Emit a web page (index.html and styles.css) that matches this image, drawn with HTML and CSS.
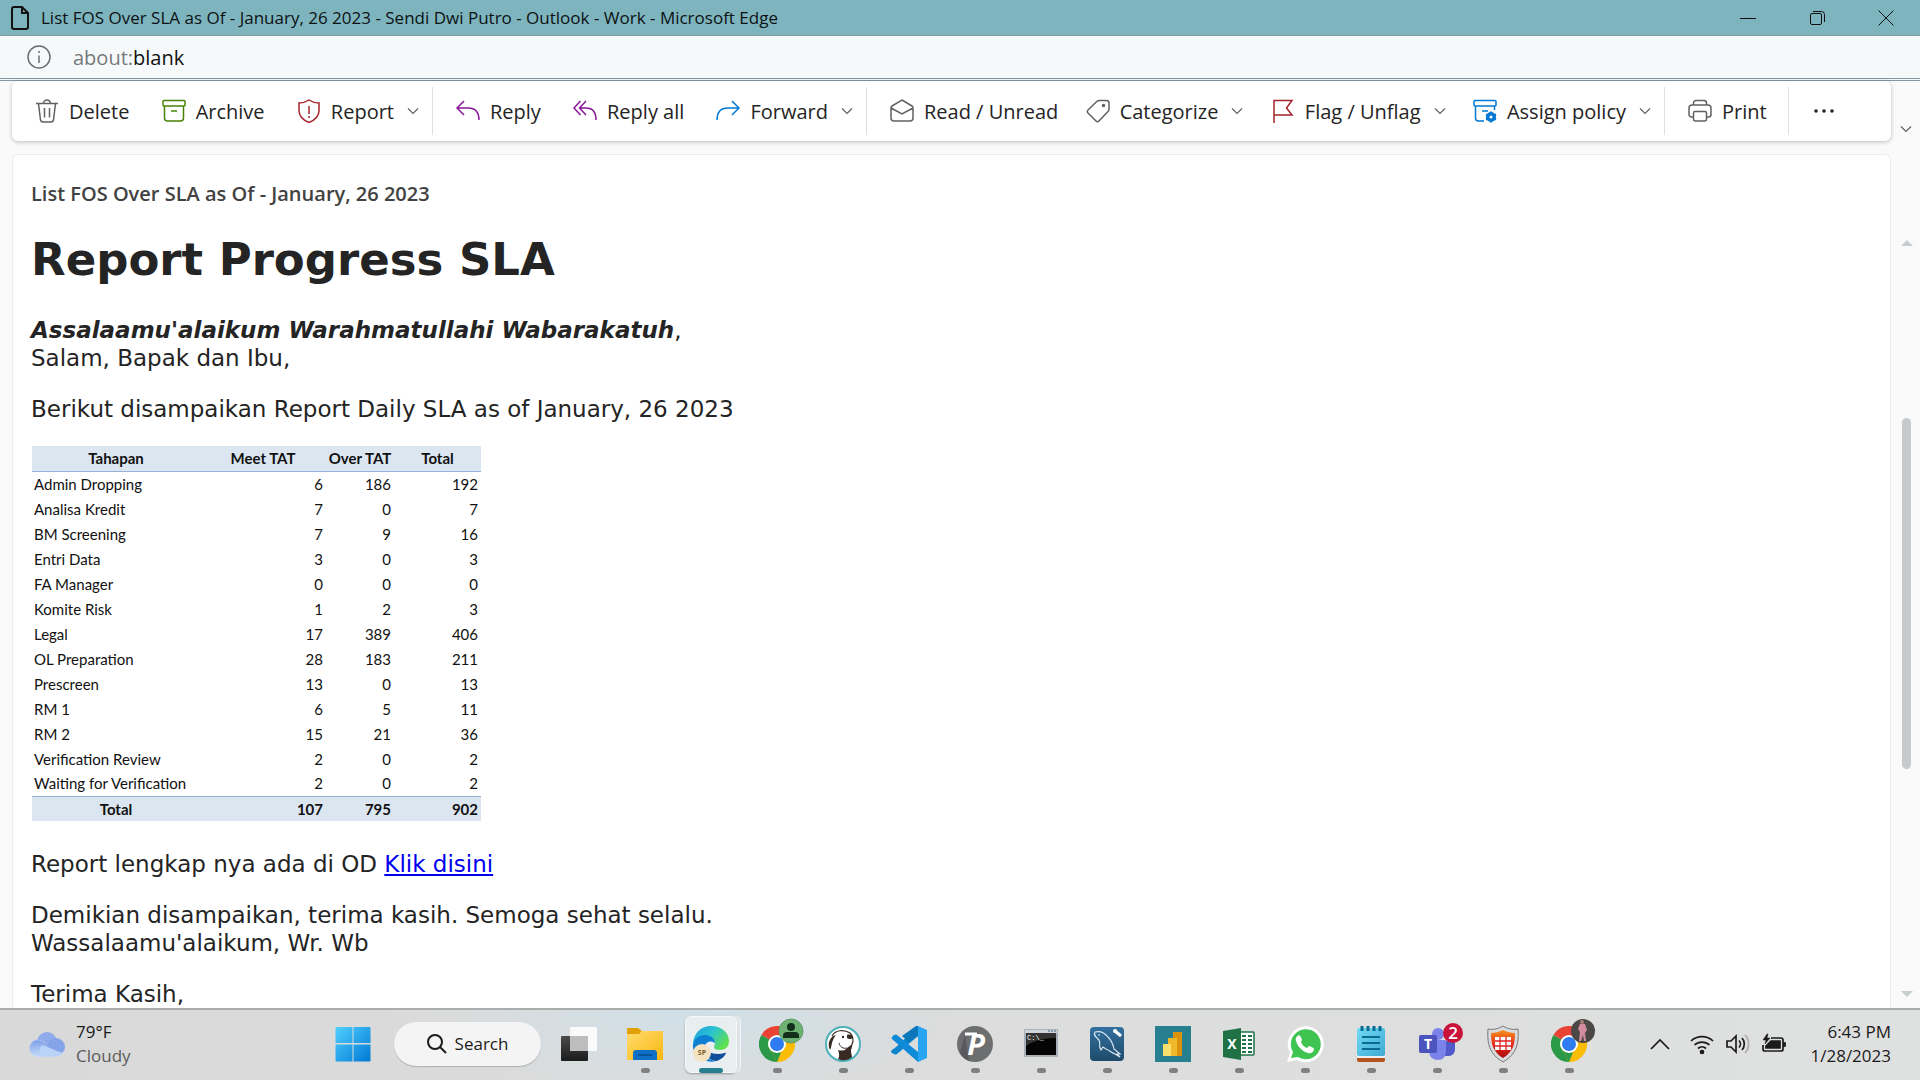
FILE: index.html
```html
<!DOCTYPE html>
<html lang="id">
<head>
<meta charset="utf-8">
<title>List FOS Over SLA as Of - January, 26 2023</title>
<link rel="stylesheet" href="styles.css">
</head>
<body>
<svg class="defs" aria-hidden="true">
  <defs>
    <symbol id="chev" viewBox="0 0 12 12"><path d="M1 3.500l5 5 5-5" fill="none" stroke="currentColor" stroke-width="1.200"/></symbol>
    <symbol id="chrome" viewBox="0 0 36 36">
      <path d="M18 18L2.400 9A18 18 0 0 1 33.600 9Z" fill="#ea4335"/>
      <path d="M18 18V0A18 18 0 0 1 33.600 9Z" fill="#ea4335"/>
      <path d="M18 18L33.600 9A18 18 0 0 1 18 36Z" fill="#fbbc05"/>
      <path d="M18 18v18A18 18 0 0 1 2.400 9Z" fill="#2a9a49"/>
      <path d="M10.200 22.500L18 36l7.800-13.500z" fill="#fbbc05"/>
      <path d="M10.200 22.500L18 36l4-9.500z" fill="#2a9a49"/>
      <circle cx="18" cy="18" r="9" fill="#fff"/><circle cx="18" cy="18" r="7" fill="#2f7bf0"/>
    </symbol>
  </defs>
  <defs>
    <linearGradient id="gWin" x1="0" y1="0" x2="1" y2="1"><stop offset="0" stop-color="#4fd0ff"/><stop offset="1" stop-color="#0078d4"/></linearGradient>
    <linearGradient id="gFolder" x1="0" y1="0" x2="1" y2="1"><stop offset="0" stop-color="#ffdc6e"/><stop offset="1" stop-color="#fbb711"/></linearGradient>
    <linearGradient id="gEdge" x1="0" y1="0" x2="1" y2="0.600"><stop offset="0" stop-color="#1a9de0"/><stop offset="0.500" stop-color="#2bc3d2"/><stop offset="1" stop-color="#5fe04f"/></linearGradient>
    <linearGradient id="gDark" x1="0" y1="0" x2="0" y2="1"><stop offset="0" stop-color="#4a4a4a"/><stop offset="1" stop-color="#1c1c1c"/></linearGradient>
    <linearGradient id="gCloud" x1="0" y1="0" x2="0" y2="1"><stop offset="0" stop-color="#7f9fe6"/><stop offset="1" stop-color="#c5dcfa"/></linearGradient>
    <linearGradient id="gNote" x1="0" y1="0" x2="1" y2="1"><stop offset="0" stop-color="#6fdcf5"/><stop offset="1" stop-color="#3fa9d2"/></linearGradient>
    <linearGradient id="gSea" x1="0" y1="0" x2="0" y2="1"><stop offset="0" stop-color="#33709f"/><stop offset="1" stop-color="#1f4b6b"/></linearGradient>
    <linearGradient id="gShield" x1="0" y1="0" x2="0" y2="1"><stop offset="0" stop-color="#f7941d"/><stop offset="0.550" stop-color="#e2231a"/><stop offset="1" stop-color="#a80d0d"/></linearGradient>
  </defs>
</svg>

<header class="titlebar">
  <svg class="doc-icon" viewBox="0 0 20 26"><path d="M2 4a2 2 0 0 1 2-2h8l6 6v14a2 2 0 0 1-2 2H4a2 2 0 0 1-2-2zM12 2v6h6" fill="none" stroke="#111" stroke-width="2"/></svg>
  <h1 class="window-title">List FOS Over SLA as Of - January, 26 2023 - Sendi Dwi Putro - Outlook - Work - Microsoft Edge</h1>
  <div class="window-controls">
    <button aria-label="Minimize"><svg viewBox="0 0 16 16"><path d="M0 8.500h16" stroke="#111"/></svg></button>
    <button aria-label="Restore"><svg viewBox="0 0 16 16"><path d="M1.500 5a1.500 1.500 0 0 1 1.500-1.500h8A1.500 1.500 0 0 1 12.500 5v8a1.500 1.500 0 0 1-1.500 1.500H3A1.500 1.500 0 0 1 1.500 13zM4 1.500h8.500a3 3 0 0 1 3 3V12" fill="none" stroke="#111"/></svg></button>
    <button aria-label="Close"><svg viewBox="0 0 16 16"><path d="M.5.500l15 15M15.500.500l-15 15" stroke="#111"/></svg></button>
  </div>
</header>
<div class="addressbar">
  <svg class="info-icon" viewBox="0 0 26 26"><circle cx="13" cy="13" r="11" fill="none" stroke="#6b6e70" stroke-width="1.500"/><path d="M13 11.500V19M13 7v2" stroke="#6b6e70" stroke-width="1.500"/></svg>
  <span class="url"><span class="scheme">about:</span>blank</span>
</div>

<main class="app">
  <nav class="toolbar" aria-label="Message actions">
    <div class="group group-a">
      <button><svg viewBox="0 0 24 24" stroke="#616161"><path d="M1 4.500h22M8.500 4.500a3.500 3.500 0 0 1 7 0M3.500 4.500l2 16.500a2.500 2.500 0 0 0 2.500 2h8a2.500 2.500 0 0 0 2.500-2l2-16.500M9.500 9v9.500M14.500 9v9.500"/></svg>Delete</button>
      <button><svg viewBox="0 0 24 24" stroke="#498205"><path d="M2 1.500h20a1 1 0 0 1 1 1V6a1 1 0 0 1-1 1H2a1 1 0 0 1-1-1V2.500a1 1 0 0 1 1-1zM2.500 7v12a3 3 0 0 0 3 3h13a3 3 0 0 0 3-3V7M9 12h6"/></svg>Archive</button>
      <button><svg viewBox="0 0 24 24" stroke="#a4262c"><path d="M12 1c3 2 6 3 10 3v7.500c0 6-4 9.500-10 12-6-2.500-10-6-10-12V4c4 0 7-1 10-3z"/><path d="M12 7v8M12 17v2" /></svg>Report<svg class="chev"><use href="#chev"/></svg></button>
    </div>
    <div class="group group-b">
      <button><svg viewBox="0 0 24 24" stroke="#881798"><path d="M8 2L1 9l7 7M1 9h11c7 0 11 4 11 12"/></svg>Reply</button>
      <button><svg viewBox="0 0 24 24" stroke="#881798"><path d="M7.500 2L1 9l6.500 7M13 2L6.500 9l6.500 7M7 9h6c6.500 0 10 4 10 12"/></svg>Reply all</button>
      <button><svg viewBox="0 0 24 24" stroke="#0078d4"><path d="M16 2l7 7-7 7M23 9H12C5 9 1 13 1 21"/></svg>Forward<svg class="chev"><use href="#chev"/></svg></button>
    </div>
    <div class="group group-c">
      <button><svg viewBox="0 0 24 24" stroke="#616161"><path d="M12 1l10 6a2 2 0 0 1 1 2v10a3 3 0 0 1-3 3H4a3 3 0 0 1-3-3V9a2 2 0 0 1 1-2zM1 9l11 6 11-6"/></svg>Read / Unread</button>
      <button><svg viewBox="0 0 24 24" stroke="#616161"><path d="M13 1.500h7.500a2.500 2.500 0 0 1 2.500 2.500v6.500a3 3 0 0 1-1 2L13 22a2 2 0 0 1-3 0l-8-8a2 2 0 0 1 0-3l9-8.700a3 3 0 0 1 2-.8z"/><circle cx="17.500" cy="6.500" r="1" fill="#616161"/></svg>Categorize<svg class="chev"><use href="#chev"/></svg></button>
      <button><svg viewBox="0 0 24 24" stroke="#a4262c"><path d="M3 24V1.500h18L15.500 9l5.500 7H3"/></svg>Flag / Unflag<svg class="chev"><use href="#chev"/></svg></button>
      <button><svg viewBox="0 0 24 24" stroke="#0078d4"><path d="M2 1.500h20a1 1 0 0 1 1 1V6a1 1 0 0 1-1 1H2a1 1 0 0 1-1-1V2.500a1 1 0 0 1 1-1zM2.500 7v12a3 3 0 0 0 3 3H11M21.500 7v4M9 12h6"/><circle cx="18" cy="18" r="3.500" stroke-width="3"/><path d="M18 12.500v11M13 15.500l10 5M13 20.500l10-5" stroke-width="2"/><circle cx="18" cy="18" r="1.500" fill="#fff" stroke="none"/></svg>Assign policy<svg class="chev"><use href="#chev"/></svg></button>
    </div>
    <div class="group group-d">
      <button><svg viewBox="0 0 24 24" stroke="#616161"><path d="M5.500 6V4A2.500 2.500 0 0 1 8 1.500h8A2.500 2.500 0 0 1 18.500 4v2M5.500 18H3.500A2.500 2.500 0 0 1 1 15.500V9a3 3 0 0 1 3-3h16a3 3 0 0 1 3 3v6.500a2.500 2.500 0 0 1-2.500 2.500h-2M5.500 14a1.500 1.500 0 0 1 1.500-1.500h10a1.500 1.500 0 0 1 1.500 1.500v6a2 2 0 0 1-2 2h-9a2 2 0 0 1-2-2z"/></svg>Print</button>
    </div>
    <div class="group group-e">
      <button aria-label="More"><svg viewBox="0 0 24 24"><g fill="#242424"><circle cx="4" cy="12" r="1.800"/><circle cx="12" cy="12" r="1.800"/><circle cx="20" cy="12" r="1.800"/></g></svg></button>
    </div>
  </nav>
  <button class="ribbon-toggle" aria-label="Ribbon options"><svg class="chev"><use href="#chev"/></svg></button>

  <article class="message">
    <h2 class="subject">List FOS Over SLA as Of - January, 26 2023</h2>
    <div class="body">
      <h3>Report Progress SLA</h3>
      <p><b><i>Assalaamu'alaikum Warahmatullahi Wabarakatuh</i></b>,<br>Salam, Bapak dan Ibu,</p>
      <p>Berikut disampaikan Report Daily SLA as of January, 26 2023</p>
      <table>
        <colgroup><col class="c1"><col class="c2"><col class="c3"><col class="c4"></colgroup>
        <thead><tr><th>Tahapan</th><th>Meet TAT</th><th>Over TAT</th><th>Total</th></tr></thead>
        <tbody>
          <tr><td>Admin Dropping</td><td>6</td><td>186</td><td>192</td></tr>
          <tr><td>Analisa Kredit</td><td>7</td><td>0</td><td>7</td></tr>
          <tr><td>BM Screening</td><td>7</td><td>9</td><td>16</td></tr>
          <tr><td>Entri Data</td><td>3</td><td>0</td><td>3</td></tr>
          <tr><td>FA Manager</td><td>0</td><td>0</td><td>0</td></tr>
          <tr><td>Komite Risk</td><td>1</td><td>2</td><td>3</td></tr>
          <tr><td>Legal</td><td>17</td><td>389</td><td>406</td></tr>
          <tr><td>OL Preparation</td><td>28</td><td>183</td><td>211</td></tr>
          <tr><td>Prescreen</td><td>13</td><td>0</td><td>13</td></tr>
          <tr><td>RM 1</td><td>6</td><td>5</td><td>11</td></tr>
          <tr><td>RM 2</td><td>15</td><td>21</td><td>36</td></tr>
          <tr><td>Verification Review</td><td>2</td><td>0</td><td>2</td></tr>
          <tr><td>Waiting for Verification</td><td>2</td><td>0</td><td>2</td></tr>
        </tbody>
        <tfoot><tr><th>Total</th><td>107</td><td>795</td><td>902</td></tr></tfoot>
      </table>
      <p>Report lengkap nya ada di OD <a href="#">Klik disini</a></p>
      <p>Demikian disampaikan, terima kasih. Semoga sehat selalu.<br>Wassalaamu'alaikum, Wr. Wb</p>
      <p>Terima Kasih,</p>
    </div>
  </article>
  <div class="scrollbar" aria-hidden="true">
    <svg viewBox="0 0 12 8"><path d="M0 7l6-6 6 6z" fill="#c8cdd0"/></svg>
    <div class="track"><div class="thumb"></div></div>
    <svg viewBox="0 0 12 8"><path d="M0 1l6 6 6-6z" fill="#c8cdd0"/></svg>
  </div>
</main>

<footer class="taskbar">
  <button class="weather">
    <svg viewBox="0 0 36 26"><circle cx="18" cy="11" r="10" fill="#8fabec"/><circle cx="9" cy="17" r="8.500" fill="#a3bdf2"/><circle cx="27" cy="16" r="9" fill="#85a3e8"/><path d="M9 25.500a8 8 0 1 1 6-13l12 13z" fill="url(#gCloud)"/><path d="M9 25.500h18a8 8 0 0 0 7-4c-9-1-14-7-22-7z" fill="#b9d2f7"/></svg>
    <span class="weather-text"><span>79°F</span><span class="cond">Cloudy</span></span>
  </button>
  <div class="apps">
    <button class="app-btn" aria-label="Start"><svg viewBox="0 0 36 36"><path d="M1.500 1h16v16h-17V2a1 1 0 0 1 1-1zM18.500 1h16a1 1 0 0 1 1 1v15h-17zM.5 18.500h17v17h-16a1 1 0 0 1-1-1zM18.500 18.500h17v16a1 1 0 0 1-1 1h-16z" fill="url(#gWin)"/></svg></button>
    <button class="search"><svg viewBox="0 0 20 20"><circle cx="8" cy="8" r="7" fill="none" stroke="#1b1b1b" stroke-width="2"/><path d="M13 13l6 6" stroke="#1b1b1b" stroke-width="2"/></svg>Search</button>
    <button class="app-btn" aria-label="Task view"><svg viewBox="0 0 36 36"><rect y="10" width="27" height="25" rx="1" fill="url(#gDark)"/><rect x="9" y="1" width="27" height="24" rx="1" fill="#fafafa"/><path d="M9 10h18v15H9z" fill="#bdbdbd"/></svg></button>
    <button class="app-btn running" aria-label="File Explorer"><svg viewBox="0 0 36 36"><path d="M0 3a1 1 0 0 1 1-1h10l4 3-3 4H0z" fill="#e0a006"/><path d="M0 8h12l3-3h20a1 1 0 0 1 1 1v28H0z" fill="url(#gFolder)"/><path d="M6 34V27a3 3 0 0 1 3-3h18a3 3 0 0 1 3 3v7z" fill="#0d6fc6"/><path d="M11 29h14" stroke="#0a4a8c" stroke-width="1.500"/></svg></button>
    <button class="app-btn running active" aria-label="Microsoft Edge"><span class="tile"><svg viewBox="0 0 36 36">
      <path d="M0 17C1 7 8 0 18 0c11 0 18 7 18 15 0 6-4 9-9 9-4 0-6-1-6-3 0-1 1-2 1-4 0-3-3-6-8-6C8 11 3 13 0 17z" fill="url(#gEdge)"/>
      <path d="M0 18c1-5 6-9 12-9s10 4 10 8c-5-4-11 0-11 6 0 7 6 12 12 12-3 1-8 1-12-1C4 31-1 25 0 18z" fill="#0f7fd3"/>
      <path d="M12 20c-2 8 4 15 12 15 5-2 8-5 9-8-1-1-3 1-8 1-7 0-12-3-13-8z" fill="#114f9c"/>
      <circle cx="9" cy="27" r="9" fill="#f3e3c2"/><text x="9" y="29" class="t-sp">SP</text></svg></span></button>
    <button class="app-btn running" aria-label="Google Chrome"><svg class="wide" viewBox="0 0 44 44"><use href="#chrome" x="0" y="8" width="36" height="36"/><circle cx="32" cy="13" r="12" fill="#6fb073" stroke="#5d9c68"/><circle cx="32" cy="9" r="4" fill="#12301a"/><path d="M24 20v-2q0-4 4-4h8q4 0 4 4v2z" fill="#12301a"/></svg></button>
    <button class="app-btn running" aria-label="DBeaver"><svg viewBox="0 0 36 36"><circle cx="18" cy="18" r="17" fill="#fff" stroke="#4eb1b8" stroke-width="2"/><path d="M7 10c3-6 12-7 18-3 2 2 3 5 3 8-1 4-2 5-2 8" fill="none" stroke="#382923" stroke-width="1.200"/><path d="M13 24c3 1 7 1 9-2l4-3 0 7 1 5c-4 4-10 4-14 2 2-3 1-6 0-9z" fill="#382923"/><path d="M22 9c2-1 6 0 6 2s-4 3-6 1zM8 10c-5 5-5 9-3 14 2-3 1-9 6-15z" fill="#382923"/><path d="M14 17c1 4 4 6 8 5" fill="none" stroke="#382923"/><circle cx="18" cy="11" r="1.200" fill="#382923"/></svg></button>
    <button class="app-btn running" aria-label="Visual Studio Code"><svg viewBox="0 0 36 36"><path d="M27 0L5 21l-4 3q-2 2 0 3l2 1q2 1 3 0L27 10z" fill="#0f86cc"/><path d="M27 36L1 13q-1-1 0-2l2-2q2-1 3 0l21 17z" fill="#0e8bd8"/><path d="M27 0l9 4v28l-9 4z" fill="#27a5f2"/><path d="M27 0v10l-9 6-7-6L25 0z" fill="#0b78bc"/></svg></button>
    <button class="app-btn running" aria-label="P"><svg viewBox="0 0 36 36"><circle cx="18" cy="18" r="18" fill="#6d6e70"/><path d="M8 9L3 27a18 18 0 0 0 9 8z" fill="#59595b"/><text x="19" y="29" class="t-p">P</text><path d="M8 8h12" stroke="#fff" stroke-width="3"/></svg></button>
    <button class="app-btn running" aria-label="Command Prompt"><svg viewBox="0 0 36 36"><rect x="1" y="3" width="34" height="28" rx="1" fill="#a9b0b8"/><path d="M2 4h32v3H2z" fill="#cdd6df"/><path d="M3 7h30v22H3z" fill="#050505"/><path d="M3 7h30v5Q14 12 3 20z" fill="#333"/><text x="4" y="14" class="t-cmd">C:\_</text><path d="M25 5h2M28 5h2M31 5h2" stroke="#45617d" stroke-width="1"/></svg></button>
    <button class="app-btn running" aria-label="MySQL Workbench"><svg viewBox="0 0 36 36"><rect x="1" y="1" width="34" height="34" rx="4" fill="url(#gSea)"/><path d="M6 6c4-1 9 0 13 5 4 4 5 7 6 12l6 5-3 0 3 3-5-3c-3-1-6-4-9-5l-3-2-2 3c-3-4 0-6-2-10C7 11 4 9 6 6z" fill="none" stroke="#d7e6f1" stroke-width="1.200"/><circle cx="10" cy="9" r=".8" fill="#fff"/><path d="M26 5l6 5" stroke="#fff" stroke-width="3"/><circle cx="26" cy="5" r="2" fill="#fff"/></svg></button>
    <button class="app-btn running" aria-label="Power BI"><svg viewBox="0 0 36 36"><path d="M0 0h36v36H0z" fill="#26808f"/><path d="M18 6h9v24h-9z" fill="#d9930f"/><path d="M13 12h9v18h-9z" fill="#f0b92c"/><path d="M8 18h8v12H8z" fill="#f9df6b"/></svg></button>
    <button class="app-btn running" aria-label="Excel"><svg viewBox="0 0 36 36"><rect x="14" y="6" width="19" height="23" rx="1" fill="#fff" stroke="#207245" stroke-width="1.500"/><path d="M21 10h4M27 10h4M21 14h4M27 14h4M21 18h4M27 18h4M21 22h4M27 22h4M21 26h4M27 26h4" stroke="#207245" stroke-width="2"/><path d="M2 5l18-3v32L2 31z" fill="#207245"/><text x="11" y="23" class="t-x">X</text></svg></button>
    <button class="app-btn running" aria-label="WhatsApp"><svg viewBox="0 0 36 36"><path d="M0 36l3-9A18 18 0 1 1 10 34z" fill="#fff"/><path d="M4 32l2-6A15 15 0 1 1 11 31z" fill="#3fc351"/><path d="M12 9c-2 1-4 3-3 6 2 6 6 10 12 12 3 1 6-1 6-4 0-1-4-3-5-3l-2 2c-3-1-5-3-6-6l1-2c0-1-2-5-3-5z" fill="#fff"/></svg></button>
    <button class="app-btn running" aria-label="Notepad"><svg viewBox="0 0 36 36"><path d="M4 30h28v4a2 2 0 0 1-2 2H6a2 2 0 0 1-2-2z" fill="#b3541e"/><path d="M4 30h28v2H4z" fill="#eee"/><rect x="4" y="2" width="28" height="28" rx="2" fill="url(#gNote)"/><path d="M9 11h18M9 17h18M9 23h18" stroke="#0b6a90" stroke-width="2"/><path d="M9 0v5M15 0v5M21 0v5M27 0v5" stroke="#0b6a90" stroke-width="3"/></svg></button>
    <button class="app-btn running" aria-label="Teams"><svg class="wide" viewBox="0 0 44 44"><circle cx="19" cy="16" r="6" fill="#7b83eb"/><path d="M20 23h16v9q-1 6-7 6h-9z" fill="#5059c9"/><path d="M10 22h17v12q-1 8-8 8-8 0-9-8z" fill="#7b83eb"/><rect x="0" y="17" width="18" height="18" rx="2" fill="#4b53bc"/><text x="9" y="31" class="t-x">T</text><circle cx="34" cy="15" r="10" fill="#c9133a"/><text x="34" y="21" class="t-2">2</text></svg></button>
    <button class="app-btn running" aria-label="FortiClient"><svg viewBox="0 0 36 36"><path d="M18 0c5 3 10 4 15 3 1 14-1 25-15 33C4 28 2 17 3 3c5 1 10 0 15-3z" fill="#d8dadd" stroke="#777" stroke-width="1"/><path d="M18 4c4 2 8 3 12 3 0 11-2 19-12 25C8 26 6 18 6 7c4 0 8-1 12-3z" fill="url(#gShield)"/><path d="M10 11h16v13H10z" fill="#fff"/><path d="M15 11v13M21 11v13M10 15h16M10 20h16" stroke="#d22" stroke-width="1.300"/></svg></button>
    <button class="app-btn running" aria-label="Google Chrome, profile 2"><svg class="wide" viewBox="0 0 44 44"><use href="#chrome" x="0" y="8" width="36" height="36"/><circle cx="32" cy="13" r="12" fill="#4b4745"/><path d="M29 6h5l2 6-2 3 1 8h-2l-1-6-2 6h-2l1-9-2-3z" fill="#d48ca0"/><circle cx="31" cy="4" r="2" fill="#a98078"/></svg></button>
  </div>
  <div class="tray">
    <button aria-label="Hidden icons"><svg viewBox="0 0 24 24" stroke="#1b1b1b"><path d="M3 17l9-9 9 9"/></svg></button>
    <button class="status" aria-label="Network, volume, battery">
      <svg viewBox="0 0 24 24" stroke="#1b1b1b"><path d="M1 9a16 16 0 0 1 22 0M4.500 13a11 11 0 0 1 15 0M8 16.500a6 6 0 0 1 8 0"/><circle cx="12" cy="20" r="1.500" fill="#1b1b1b"/></svg>
      <svg viewBox="0 0 24 24" stroke="#1b1b1b"><path d="M1 9v6h4l5 5V4L5 9zM13 8.500a5 5 0 0 1 0 7M16 6a9 9 0 0 1 0 12"/><path d="M19 3a13 13 0 0 1 0 18" stroke="#aaa"/></svg>
      <svg viewBox="0 0 24 24" stroke="#1b1b1b"><path d="M9 6h10a2 2 0 0 1 2 2v9a2 2 0 0 1-2 2H3a2 2 0 0 1-2-2v-4"/><path d="M9 9h9v7H4v-2z" fill="#1b1b1b"/><path d="M22 11h1v3h-1z" fill="#1b1b1b"/><path d="M5 2L1 8h3l-1 4 5-6H5l1-4z" fill="#1b1b1b" stroke-width=".5"/></svg>
    </button>
    <button class="clock"><span>6:43 PM</span><span>1/28/2023</span></button>
  </div>
</footer>
</body>
</html>
```
FILE: styles.css
```css
* { box-sizing: border-box; }
body {
  margin: 0;
  height: 100vh;
  display: flex;
  flex-direction: column;
  overflow: hidden;
  background: #fafafa;
  color: #242424;
  font-family: "Open Sans", "Noto Sans", sans-serif;
}
button {
  border: 0;
  padding: 0;
  background: none;
  color: inherit;
  font: inherit;
}
svg { flex: none; }
.defs { position: absolute; width: 0; height: 0; }

/* Window frame */
.titlebar {
  display: flex;
  align-items: center;
  height: 36px;
  padding-left: 10px;
  background: #7eb4be;
  border-bottom: 1px solid #7d9aa3;
}
.doc-icon { width: 20px; height: 26px; }
.window-title {
  flex: 1;
  margin: 0 0 0 11px;
  font-size: 17px;
  font-weight: 400;
  color: #0c1214;
  white-space: nowrap;
}
.window-controls { display: flex; }
.window-controls button { width: 69px; height: 34px; }
.window-controls svg { width: 16px; height: 16px; display: block; margin: auto; }
.addressbar {
  display: flex;
  align-items: center;
  gap: 21px;
  height: 45px;
  padding-left: 26px;
  background: #f5f9fa;
  border-bottom: 3px double #7d9aa3;
}
.info-icon { width: 26px; height: 26px; }
.url { font-size: 20px; color: #111; }
.scheme { color: #75797b; }

/* Mail window */
.app {
  flex: 1;
  min-height: 0;
  display: grid;
  grid-template-columns: 1fr 29px;
  grid-template-rows: 60px 1fr;
  row-gap: 13px;
  padding-left: 12px;
}
.toolbar {
  display: flex;
  align-items: center;
  background: #fff;
  border-radius: 6px;
  box-shadow: 0 1px 4px rgba(0, 0, 0, .25);
  font-size: 20px;
  white-space: nowrap;
}
.group {
  display: flex;
  justify-content: space-between;
  height: 48px;
  padding: 0 13px 0 23px;
  border-right: 1px solid #e0e0e0;
}
.group-a { width: 421px; }
.group-b { width: 434px; }
.group-c { width: 798px; }
.group-d { width: 124px; }
.group-e { border: 0; }
.group button { display: flex; align-items: center; gap: 10px; }
.group svg { width: 24px; height: 24px; fill: none; stroke-width: 1.5px; }
.group svg.chev { margin-left: 3px; }
.toolbar .chev, .ribbon-toggle .chev { width: 12px; height: 12px; color: #616161; }
.ribbon-toggle { align-self: end; height: 24px; }
.message {
  display: flex;
  flex-direction: column;
  min-height: 0;
  overflow: hidden;
  padding-left: 18px;
  background: #fff;
  border: 1px solid #ececec;
  border-bottom: 0;
  border-radius: 6px 6px 0 0;
}
.subject {
  margin: 25px 0 0;
  font-size: 20px;
  font-weight: 600;
  line-height: 28px;
  color: #424242;
}
.body {
  font: 23px/28px "DejaVu Sans", Verdana, sans-serif;
}
.body h3 { margin: 24px 0 28px; font-size: 45px; line-height: 56px; }
.body p { margin: 0 0 23px; }
.body a { color: #00e; }

table {
  width: 449px;
  margin: 0 0 29px 1px;
  border-collapse: collapse;
  table-layout: fixed;
  font: 15px/24px Lato, Carlito, sans-serif;
  color: #111;
}
.c1 { width: 168px; }
.c2 { width: 126px; }
.c3 { width: 68px; }
.c4 { width: 87px; }
tr { height: 25px; }
th, td { padding: 0 3px 0 2px; white-space: nowrap; }
th { font-weight: 700; text-align: center; padding: 0; }
td { text-align: right; }
tbody td:first-child { text-align: left; }
thead, tfoot { background: #dce6f1; font-weight: 700; }
thead th { border-bottom: 1px solid #95b3d7; }
tfoot th, tfoot td { border-top: 1px solid #95b3d7; }

.scrollbar {
  display: flex;
  flex-direction: column;
  align-items: center;
  padding: 85px 0 10px 2px;
}
.scrollbar svg { width: 12px; height: 8px; }
.track { flex: 1; padding-top: 171px; }
.thumb { width: 9px; height: 351px; border-radius: 5px; background: #c6cacd; }

/* Taskbar */
.taskbar {
  display: grid;
  grid-template-columns: 1fr auto 1fr;
  align-items: center;
  height: 72px;
  padding-bottom: 2px;
  border-top: 2px solid #a9adac;
  background: radial-gradient(ellipse 260px 90px at 690px 0, #d0e0e8, transparent), linear-gradient(90deg, #d9d9d9, #dfe0e0);
  color: #1b1b1b;
  font-size: 17px;
  line-height: 24px;
}
.weather { display: flex; align-items: center; gap: 11px; padding-left: 29px; text-align: left; }
.weather svg { width: 36px; height: 26px; }
.weather-text, .clock { display: flex; flex-direction: column; }
.cond { color: #5c5c5c; }
.apps { display: flex; align-items: center; padding-left: 2px; }
.app-btn {
  position: relative;
  display: flex;
  align-items: center;
  justify-content: center;
  width: 66px;
  height: 68px;
}
.app-btn svg { width: 36px; height: 36px; overflow: visible; }
.app-btn svg.wide { width: 44px; height: 44px; margin: 0 0 8px 8px; }
.running::after {
  content: "";
  position: absolute;
  bottom: 5px;
  width: 9px;
  height: 5px;
  border-radius: 3px;
  background: #808080;
}
.active::after { width: 24px; background: #26808f; }
.tile {
  display: flex;
  align-items: center;
  justify-content: center;
  width: 52px;
  height: 57px;
  border: 1px solid #f5f7f8;
  border-radius: 6px;
  background: #e9eef0;
  box-shadow: 3px 0 0 #dde4e6, 4px 0 0 #f5f7f8, 0 1px 2px rgba(0, 0, 0, .3);
}
.search {
  display: flex;
  align-items: center;
  justify-content: center;
  gap: 8px;
  width: 147px;
  height: 44px;
  margin: 0 5px 0 8px;
  border-radius: 22px;
  background: #f4f4f4;
  box-shadow: 0 1px 1px rgba(0, 0, 0, .2);
}
.search svg { width: 20px; height: 20px; }
.tray { display: flex; align-items: center; justify-content: flex-end; padding-right: 29px; }
.tray svg { width: 24px; height: 24px; display: block; fill: none; stroke-width: 1.7px; }
.status { display: flex; gap: 12px; margin: 0 22px 0 18px; }
.clock { width: 83px; text-align: right; white-space: nowrap; }

.app-btn text { font-family: "Open Sans", sans-serif; font-weight: 700; fill: #fff; text-anchor: middle; }
.app-btn .t-sp { font-size: 7px; fill: #7a5a20; }
.app-btn .t-p { font-size: 29px; font-style: italic; }
.app-btn .t-cmd { font: 7px "Liberation Mono", monospace; text-anchor: start; }
.app-btn .t-x { font-size: 14px; }
.app-btn .t-2 { font-size: 17px; font-weight: 600; }
```
